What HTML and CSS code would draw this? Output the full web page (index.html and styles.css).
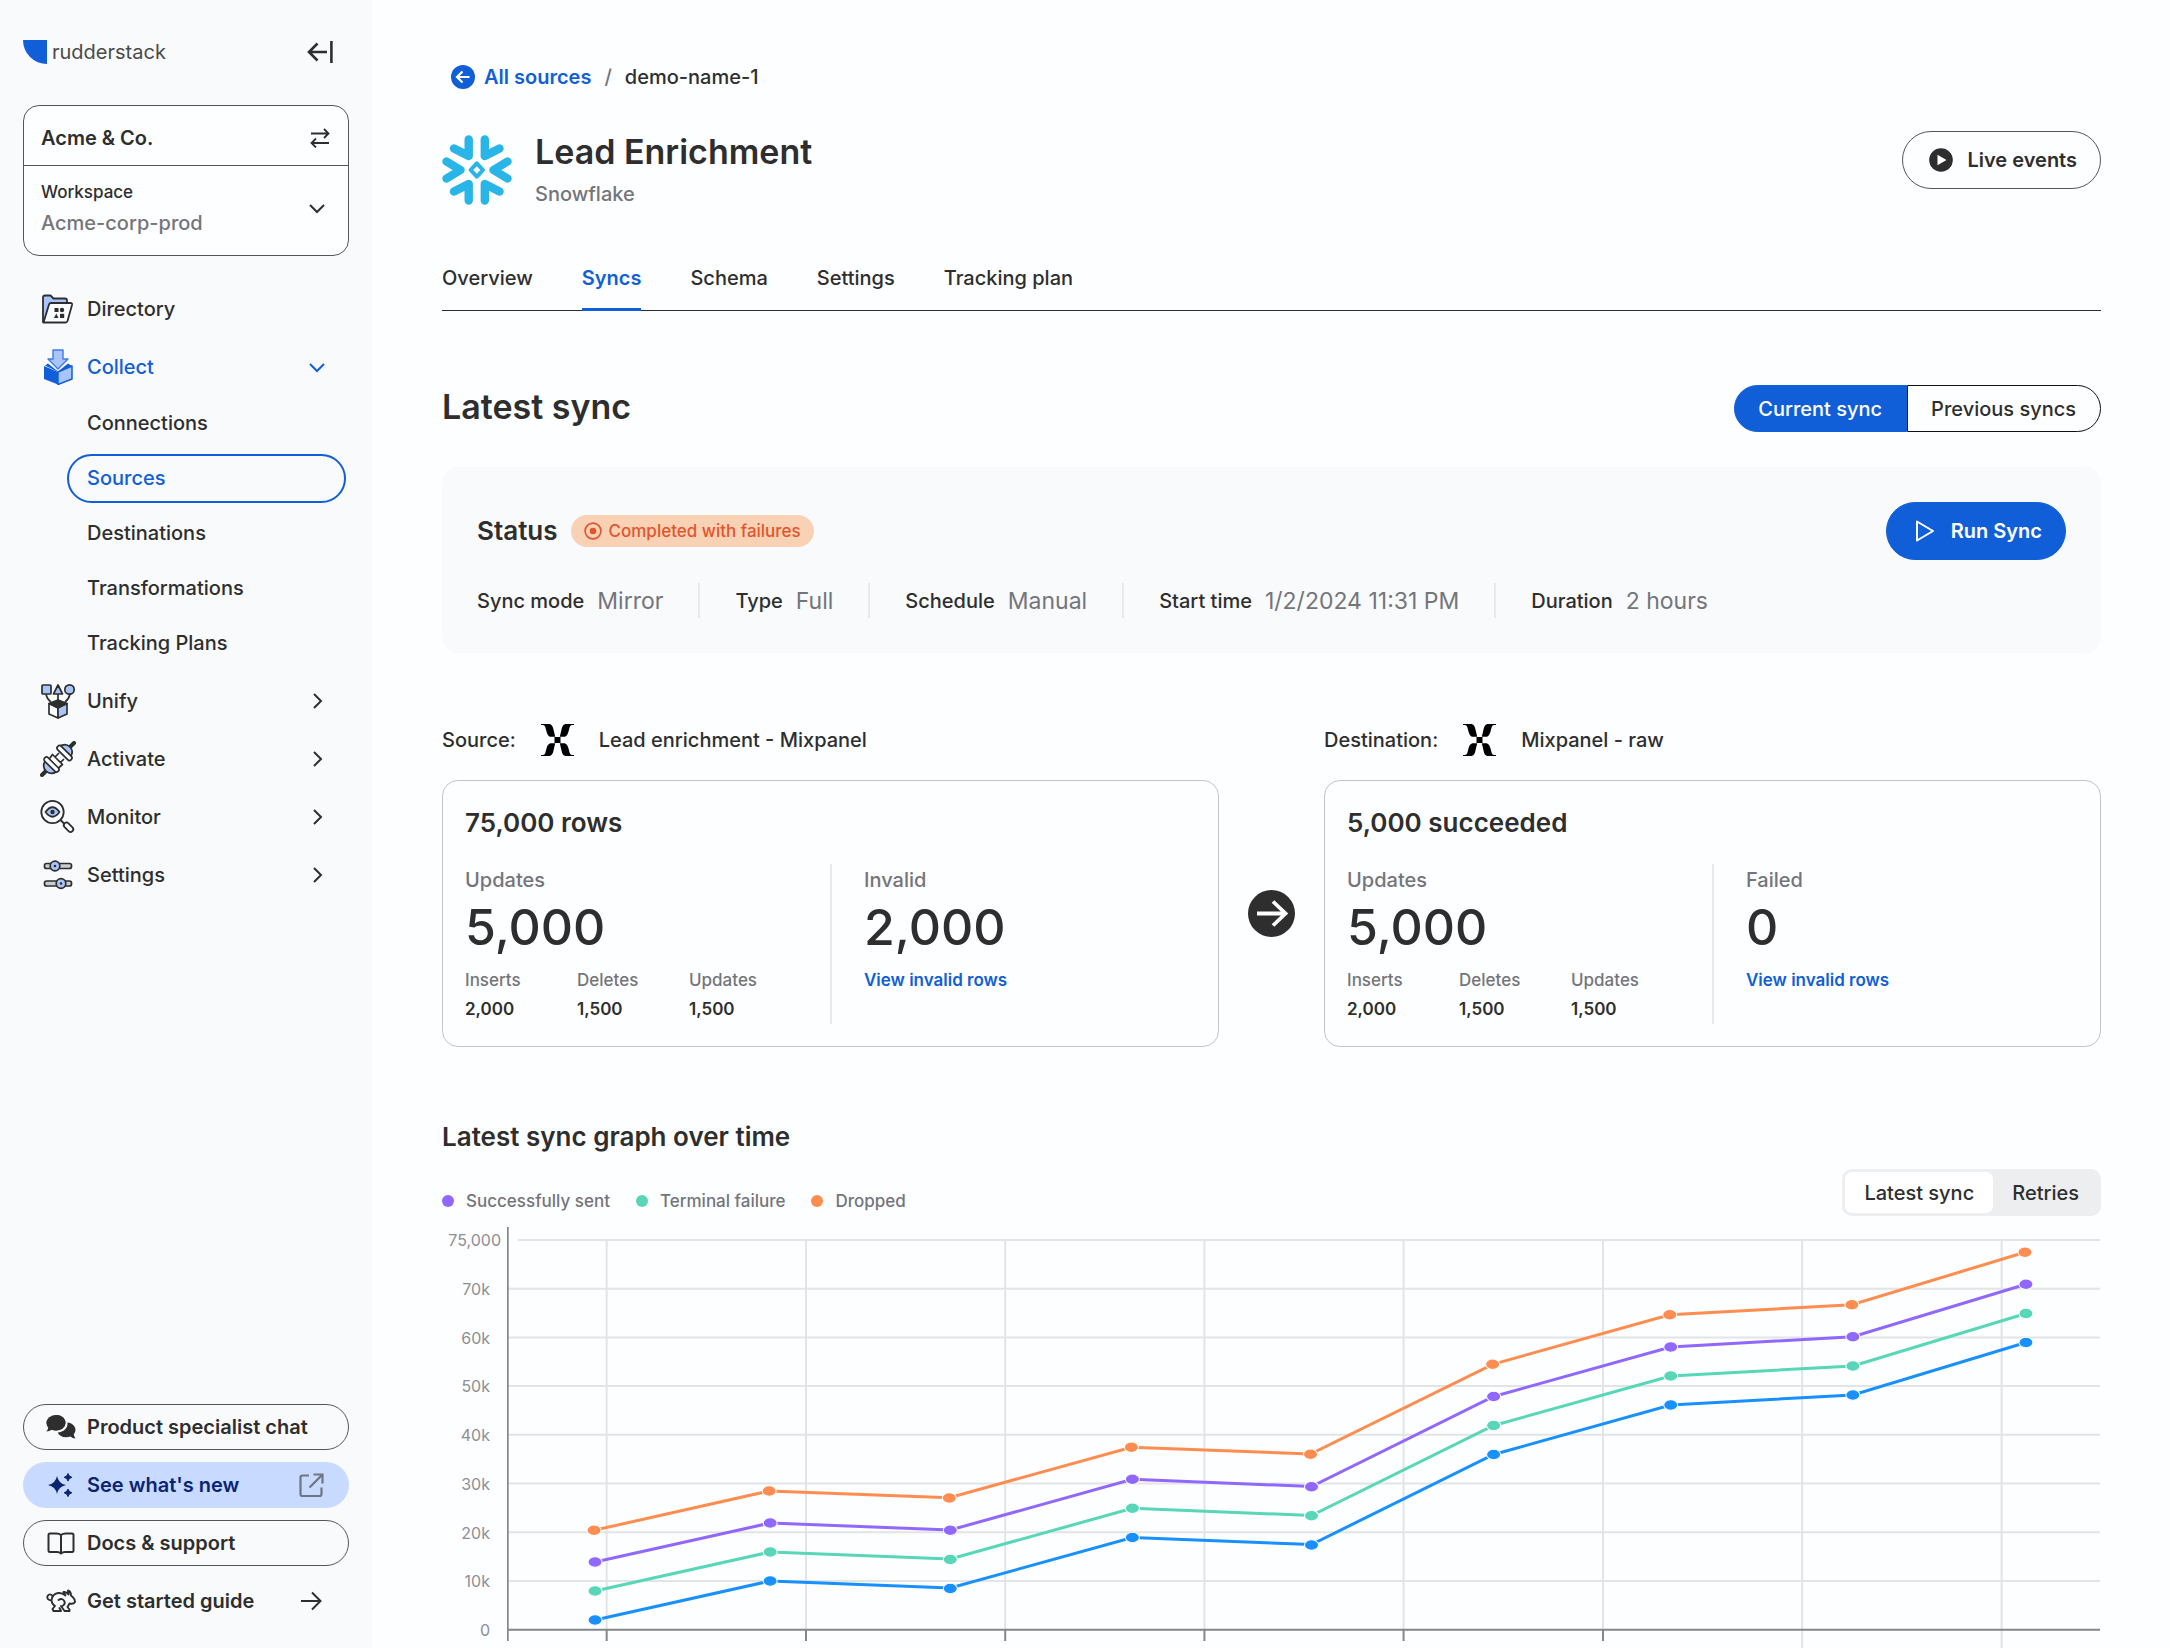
FILE: index.html
```html
<!DOCTYPE html>
<html lang="en">
<head>
<meta charset="utf-8">
<title>Lead Enrichment - Syncs</title>
<link rel="stylesheet" href="styles.css">
</head>
<body>
<svg class="sprite" aria-hidden="true">
  <symbol id="chevron-right" viewBox="0 0 20 20"><path d="M7 3l7 7-7 7" fill="none" stroke="currentColor" stroke-width="2"/></symbol>
  <symbol id="chevron-down" viewBox="0 0 20 20"><path d="M3 7l7 7 7-7" fill="none" stroke="currentColor" stroke-width="2"/></symbol>
  <symbol id="mixpanel" viewBox="0 0 33 32">
    <path id="mixpanel-arm" d="M0 0H7.500C11 0 11.800 2.500 12.500 5.500L14.200 12.800H10.300C7.500 12.800 6.300 10.500 5.500 7.500L4.300 3C3.800 1.300 2.500 1 0 1z"/>
    <use href="#mixpanel-arm" transform="matrix(-1 0 0 1 33 0)"/>
    <use href="#mixpanel-arm" transform="matrix(1 0 0 -1 0 32)"/>
    <use href="#mixpanel-arm" transform="matrix(-1 0 0 -1 33 32)"/>
    <path d="M13.500 13h6v6h-6z"/>
  </symbol>
</svg>
<div class="shell">
  <aside class="sidebar">
    <div class="sidebar-head">
      <a class="brand" href="#">
        <svg width="24" height="24" viewBox="0 0 24 24"><path d="M0 0h24v24A24 24 0 0 1 0 0z" fill="#115fd8"/></svg>
        <span>rudderstack</span>
      </a>
      <button class="collapse" aria-label="Collapse sidebar">
        <svg width="26" height="24" viewBox="0 0 26 24" fill="none" stroke="currentColor" stroke-width="2.600"><path d="M20 12H2M10.500 3.500L2 12l8.500 8.500M24.400 1v22"/></svg>
      </button>
    </div>

    <div class="workspace">
      <button class="org">
        <span>Acme &amp; Co.</span>
        <svg width="20" height="20" viewBox="0 0 20 20" fill="none" stroke="currentColor" stroke-width="1.800"><path d="M1 5.500h17M14 1l4.500 4.500L14 10M19 15H2M6 10.500L1.500 15 6 19.500"/></svg>
      </button>
      <button class="space">
        <span class="space-text"><span class="space-label">Workspace</span><span class="space-name">Acme-corp-prod</span></span>
        <svg class="chevron"><use href="#chevron-down"/></svg>
      </button>
    </div>

    <nav class="nav">
      <a class="nav-item" href="#">
        <svg class="nav-icon" viewBox="0 0 36 36" fill="none" stroke="#2e2e2e" stroke-width="1.800" stroke-linejoin="round">
          <path d="M3 31V6.500Q3 4.500 5 4.500h5.500l3 3H25q2 0 2 2V12L10 31z" fill="#a9c4fb"/>
          <path d="M3.500 31.500L9 13.500Q9.500 12 11 12h19.500q2 0 1.500 2l-4.500 16q-.5 1.500-2 1.500z" fill="#fdfeff"/>
          <g fill="#2e2e2e" stroke="none"><rect x="14.500" y="17" width="4" height="4"/><circle cx="22" cy="19" r="2.200"/><path d="M14 27l2.300-4.500 2.200 4.500z"/><rect x="20" y="22.800" width="4.200" height="4.200"/></g>
        </svg>
        <span>Directory</span>
      </a>
      <a class="nav-item is-open" href="#">
        <svg class="nav-icon" viewBox="0 0 36 36">
          <path d="M13 1h10v9h5L18 20 8 10h5z" fill="#a9c4fb" stroke="#3f7be6" stroke-width="1.400" stroke-linejoin="round"/>
          <path d="M5 16.500l3-2 10 8 10-8 4 2.500L18 23z" fill="#115fd8"/>
          <path d="M4 17l14 6v12.500L4 30z" fill="#115fd8"/>
          <path d="M32 17l-14 6v12.500L32 30z" fill="#a9c4fb" stroke="#115fd8" stroke-width="1.500" stroke-linejoin="round"/>
        </svg>
        <span>Collect</span>
        <svg class="chevron"><use href="#chevron-down"/></svg>
      </a>
      <div class="subnav">
        <a href="#">Connections</a>
        <a href="#" class="is-current" aria-current="page">Sources</a>
        <a href="#">Destinations</a>
        <a href="#">Transformations</a>
        <a href="#">Tracking Plans</a>
      </div>
      <a class="nav-item" href="#">
        <svg class="nav-icon" viewBox="0 0 36 36" fill="none" stroke="#2e2e2e" stroke-width="1.700" stroke-linejoin="round">
          <path d="M6 11q1 5 5 8M18 11v8M30 11q-1 5-5 8"/>
          <rect x="2" y="2" width="9" height="9" rx="1" fill="#a9c4fb"/><path d="M18 2l4.500 9h-9z" fill="#a9c4fb"/><circle cx="29.500" cy="6.500" r="4.700" fill="#a9c4fb"/>
          <path d="M9 20.500l9 4V35l-9-4z" fill="#fdfeff"/><path d="M27 20.500l-9 4V35l9-4z" fill="#a9c4fb"/>
          <path d="M9 20.500l9-3.500 9 3.500-9 4.500z" fill="#2e2e2e"/>
        </svg>
        <span>Unify</span>
        <svg class="chevron"><use href="#chevron-right"/></svg>
      </a>
      <a class="nav-item" href="#">
        <svg class="nav-icon" viewBox="0 0 36 36" fill="none" stroke="#2e2e2e" stroke-width="1.700" stroke-linejoin="round" stroke-linecap="round">
          <path d="M30 6l4-4M2 34l4-4" stroke-width="4"/>
          <path d="M17.500 6.500Q25 1 30 6t-1.500 12.500z" fill="#a9c4fb"/>
          <rect x="15" y="9.500" width="19" height="5" rx="2.500" transform="rotate(45 24.500 12)" fill="#fdfeff"/>
          <path d="M6.500 18Q1 25 6 30t12.500-.5z" fill="#a9c4fb"/>
          <rect x="2" y="21" width="19" height="5" rx="2.500" transform="rotate(45 11.500 23.500)" fill="#fdfeff"/>
          <path d="M10 17l2.500-3.500 10 10L19 26.500M15 16l3.500-3.500M20.500 21.500l3-3" fill="#fdfeff"/>
        </svg>
        <span>Activate</span>
        <svg class="chevron"><use href="#chevron-right"/></svg>
      </a>
      <a class="nav-item" href="#">
        <svg class="nav-icon" viewBox="0 0 36 36" fill="none" stroke="#2e2e2e" stroke-width="1.800" stroke-linejoin="round">
          <circle cx="12.500" cy="13" r="11.200"/>
          <path d="M5.500 13q7-9.500 14 0-7 9.500-14 0z" fill="#a9c4fb"/><circle cx="12.500" cy="13" r="2.200" fill="#2e2e2e" stroke="none"/>
          <path d="M20.500 21l4 4"/><rect x="23" y="25.500" width="11" height="5.500" rx="2.700" transform="rotate(45 28.500 28.300)"/>
        </svg>
        <span>Monitor</span>
        <svg class="chevron"><use href="#chevron-right"/></svg>
      </a>
      <a class="nav-item" href="#">
        <svg class="nav-icon" viewBox="0 0 36 36" fill="#c9ccd0" stroke="#2e2e2e" stroke-width="1.700">
          <rect x="4.500" y="6.500" width="27" height="5" rx="2"/><circle cx="15" cy="9" r="4.800" fill="#a9c4fb"/><circle cx="15" cy="9" r="1.300" fill="#2e2e2e" stroke="none"/>
          <rect x="4.500" y="24" width="27" height="5" rx="2"/><circle cx="21" cy="26.500" r="4.800" fill="#a9c4fb"/><circle cx="21" cy="26.500" r="1.300" fill="#2e2e2e" stroke="none"/>
        </svg>
        <span>Settings</span>
        <svg class="chevron"><use href="#chevron-right"/></svg>
      </a>
    </nav>

    <div class="help">
      <button class="help-item outlined">
        <svg class="help-icon" viewBox="0 0 30 26" fill="#2e2e2e">
          <path d="M10 1c5.500 0 9.500 3.400 9.500 7.800S15.500 16.500 10 16.500q-2.300 0-4.300-.8Q3.500 17.500.3 17.500q1.600-1.700 2-4Q.5 11.500.5 8.800.5 4.400 10 1z"/><ellipse cx="10" cy="8.700" rx="9.500" ry="7.700"/>
          <path d="M21.500 8.500c4.500.6 8 3.500 8 7.300q0 2.700-1.800 4.600.5 2.300 2 4-3.200 0-5.400-1.900-2 .8-4.200.8c-4 0-7-2-8.500-4.800 6-.3 10.500-4.300 9.900-10z"/>
        </svg>
        <span>Product specialist chat</span>
      </button>
      <a class="help-item highlight" href="#">
        <svg class="help-icon" viewBox="0 0 30 26" fill="#0a2472">
          <path d="M11 4q1.500 7.500 9 9-7.500 1.500-9 9-1.500-7.500-9-9 7.500-1.500 9-9z"/>
          <path d="M22 1.500q.6 3 3.800 3.800-3.200.8-3.800 3.800-.6-3-3.800-3.800 3.200-.8 3.800-3.800zM22 17q.6 3 3.800 3.800-3.200.8-3.800 3.800-.6-3-3.800-3.800 3.200-.8 3.800-3.800z" stroke="#0a2472"/>
        </svg>
        <span>See what's new</span>
        <svg class="help-trail" viewBox="0 0 26 26" fill="none" stroke="#6f7683" stroke-width="2.200"><path d="M11 3.500H4.500Q2.500 3.500 2.500 5.500V22q0 2 2 2h17q2 0 2-2v-6.500M11.500 15.500L24.500 2.500M15.500 2.500h9v9"/></svg>
      </a>
      <a class="help-item outlined" href="#">
        <svg class="help-icon" viewBox="0 0 30 26" fill="none" stroke="#2e2e2e" stroke-width="2" stroke-linejoin="round"><path d="M15 5Q13 3.500 10.500 3.500H4Q2.500 3.500 2.500 5v15.500Q2.500 22 4 22h7q2.500 0 4 1.500Q16.500 22 19 22h7q1.500 0 1.500-1.500V5q0-1.500-1.500-1.500h-6.500Q17 3.500 15 5zM15 5v18"/></svg>
        <span>Docs &amp; support</span>
      </a>
      <a class="help-item plain" href="#">
        <svg class="help-icon" viewBox="0 0 30 26" fill="none" stroke="#2e2e2e" stroke-width="1.900" stroke-linejoin="round" stroke-linecap="round">
          <path d="M7 8.500Q4 4.500 1.500 8q-1 4 4 4.500M5.500 12.500Q6 6 12 5q4-.5 7.500 2.500L17.500 4q3-.5 5 2.500L22 2.500q3 1 3 5 4 3 4 6.500-1.500 2.500-5.500 1.500l-2 3.500 2 2.500v1.500h-5l-3.500-5M5.500 12.500Q6 16.500 9 18l-2.500 3 1 2h7.500l-1.500-3M12.500 12q4-2.500 6 1.500 1 3-2 4.500"/>
        </svg>
        <span>Get started guide</span>
        <svg class="help-trail" viewBox="0 0 26 26" fill="none" stroke="#2e2e2e" stroke-width="2"><path d="M3 13h19M14 4.500l8.500 8.500-8.500 8.500"/></svg>
      </a>
    </div>
  </aside>

  <main class="main">
    <nav class="crumbs" aria-label="Breadcrumb">
      <a href="#">
        <svg width="24" height="24" viewBox="0 0 24 24"><circle cx="12" cy="12" r="12" fill="#115fd8"/><path d="M18.500 12h-12M11.500 6.500L6 12l5.500 5.500" fill="none" stroke="#fff" stroke-width="2.200"/></svg>
        All sources
      </a>
      <span class="slash">/</span>
      <span>demo-name-1</span>
    </nav>

    <header class="page-head">
      <svg class="source-logo" viewBox="0 0 70 70" fill="none" stroke="#29b5e8" stroke-width="8.400" stroke-linecap="round" stroke-linejoin="round">
        <path d="M12 13.500l14.700 7.500V4.500M57.500 13.500L42.800 21V4.500M12 56.500L26.700 49v16.500M57.500 56.500L42.800 49v16.500M4.500 26.500L18.500 35l-14 8.500M65.500 26.500L51.500 35l14 8.500"/>
        <path d="M34.800 28.300l6.200 6.700-6.200 6.700L28.600 35z" stroke-width="4"/>
      </svg>
      <div class="page-title">
        <h1>Lead Enrichment</h1>
        <p>Snowflake</p>
      </div>
      <button class="pill-button outline">
        <svg width="24" height="24" viewBox="0 0 24 24"><circle cx="12" cy="12" r="11.800" fill="#2e2e2e"/><path d="M8.500 6.800l9 5.200-9 5.200z" fill="#fff"/></svg>
        Live events
      </button>
    </header>

    <nav class="tabs" aria-label="Source sections">
      <a href="#">Overview</a>
      <a href="#" class="is-active" aria-current="page">Syncs</a>
      <a href="#">Schema</a>
      <a href="#">Settings</a>
      <a href="#">Tracking plan</a>
    </nav>

    <div class="section-head">
      <h2>Latest sync</h2>
      <div class="segmented">
        <button class="is-on">Current sync</button>
        <button>Previous syncs</button>
      </div>
    </div>

    <section class="status">
      <div class="status-head">
        <h3>Status</h3>
        <span class="badge">
          <svg width="18" height="18" viewBox="0 0 18 18"><circle cx="9" cy="9" r="7.900" fill="none" stroke="currentColor" stroke-width="1.700"/><circle cx="9" cy="9" r="3.300" fill="currentColor"/></svg>
          Completed with failures
        </span>
        <button class="pill-button primary">
          <svg width="24" height="24" viewBox="0 0 24 24" fill="none" stroke="#fff" stroke-width="2" stroke-linejoin="round"><path d="M4 2.500l16 9.500L4 21.500z"/></svg>
          Run Sync
        </button>
      </div>
      <dl class="facts">
        <div><dt>Sync mode</dt><dd>Mirror</dd></div>
        <div><dt>Type</dt><dd>Full</dd></div>
        <div><dt>Schedule</dt><dd>Manual</dd></div>
        <div><dt>Start time</dt><dd>1/2/2024 11:31 PM</dd></div>
        <div><dt>Duration</dt><dd>2 hours</dd></div>
      </dl>
    </section>

    <section class="transfer">
      <div class="endpoint">
        <span>Source:</span>
        <svg class="endpoint-logo"><use href="#mixpanel"/></svg>
        <span>Lead enrichment - Mixpanel</span>
      </div>
      <div class="endpoint endpoint-to">
        <span>Destination:</span>
        <svg class="endpoint-logo"><use href="#mixpanel"/></svg>
        <span>Mixpanel - raw</span>
      </div>
      <article class="card">
        <h3>75,000 rows</h3>
        <div class="card-body">
          <div class="metric">
            <span class="metric-label">Updates</span>
            <strong class="metric-value">5,000</strong>
            <dl class="breakdown">
              <div><dt>Inserts</dt><dd>2,000</dd></div>
              <div><dt>Deletes</dt><dd>1,500</dd></div>
              <div><dt>Updates</dt><dd>1,500</dd></div>
            </dl>
          </div>
          <div class="metric">
            <span class="metric-label">Invalid</span>
            <strong class="metric-value">2,000</strong>
            <a href="#">View invalid rows</a>
          </div>
        </div>
      </article>
      <svg class="transfer-arrow" viewBox="0 0 47 47"><circle cx="23.500" cy="23.500" r="23.500" fill="#2e2e2e"/><path d="M9 23.500h28M25 11.500l12.500 12L25 35.500" fill="none" stroke="#fff" stroke-width="3.800"/></svg>
      <article class="card">
        <h3>5,000 succeeded</h3>
        <div class="card-body">
          <div class="metric">
            <span class="metric-label">Updates</span>
            <strong class="metric-value">5,000</strong>
            <dl class="breakdown">
              <div><dt>Inserts</dt><dd>2,000</dd></div>
              <div><dt>Deletes</dt><dd>1,500</dd></div>
              <div><dt>Updates</dt><dd>1,500</dd></div>
            </dl>
          </div>
          <div class="metric">
            <span class="metric-label">Failed</span>
            <strong class="metric-value">0</strong>
            <a href="#">View invalid rows</a>
          </div>
        </div>
      </article>
    </section>

    <section class="graph">
      <h3>Latest sync graph over time</h3>
      <div class="graph-head">
        <ul class="legend">
          <li class="sent">Successfully sent</li>
          <li class="failed">Terminal failure</li>
          <li class="dropped">Dropped</li>
        </ul>
        <div class="switch">
          <button class="is-on">Latest sync</button>
          <button>Retries</button>
        </div>
      </div>
      <div class="chart">
        <div class="y-axis">
          <span>75,000</span><span>70k</span><span>60k</span><span>50k</span><span>40k</span><span>30k</span><span>20k</span><span>10k</span><span>0</span>
        </div>
        <svg class="plot" viewBox="0 0 1593 421" preserveAspectRatio="none" role="img" aria-label="Rows per sync over time">
          <path class="grid" d="M11 13H1592M0 61.700H1592M0 110.400H1592M0 159H1592M0 207.800H1592M0 256.500H1592M0 305.200H1592M0 354H1592M99.600 13V403M298.800 13V403M497.900 13V403M697 13V403M896 13V403M1095.300 13V403M1294.300 13V421M1493.700 13V421"/>
          <path class="axis" d="M.7 0V414M0 402.700H1592M99.600 403V414M298.800 403V414M497.900 403V414M697 403V414M896 403V414M1095.300 403V414"/>
          <g class="series blue">
            <polyline points="88,393 263,354 443,361 625,310.500 804,317.500 986,227.500 1163,178 1345,168 1518,115.500"/>
            <ellipse cx="88" cy="393" rx="7" ry="5.200"/><ellipse cx="263" cy="354" rx="7" ry="5.200"/><ellipse cx="443" cy="361.500" rx="7" ry="5.200"/><ellipse cx="625" cy="310.500" rx="7" ry="5.200"/><ellipse cx="804" cy="318" rx="7" ry="5.200"/><ellipse cx="986" cy="227.500" rx="7" ry="5.200"/><ellipse cx="1163" cy="178" rx="7" ry="5.200"/><ellipse cx="1345" cy="168" rx="7" ry="5.200"/><ellipse cx="1518" cy="115.500" rx="7" ry="5.200"/>
          </g>
          <g class="series green">
            <polyline points="88,364 263,325 443,332 625,281.300 804,288.500 986,198.500 1163,149 1345,139 1518,86.500"/>
            <ellipse cx="88" cy="364" rx="7" ry="5.200"/><ellipse cx="263" cy="325" rx="7" ry="5.200"/><ellipse cx="443" cy="332.500" rx="7" ry="5.200"/><ellipse cx="625" cy="281.300" rx="7" ry="5.200"/><ellipse cx="804" cy="288.700" rx="7" ry="5.200"/><ellipse cx="986" cy="198.500" rx="7" ry="5.200"/><ellipse cx="1163" cy="149" rx="7" ry="5.200"/><ellipse cx="1345" cy="139" rx="7" ry="5.200"/><ellipse cx="1518" cy="86.500" rx="7" ry="5.200"/>
          </g>
          <g class="series purple">
            <polyline points="88,335 263,296 443,303 625,252.300 804,259.500 986,169.500 1163,120 1345,109.700 1518,57.300"/>
            <ellipse cx="88" cy="335" rx="7" ry="5.200"/><ellipse cx="263" cy="296" rx="7" ry="5.200"/><ellipse cx="443" cy="303.300" rx="7" ry="5.200"/><ellipse cx="625" cy="252.300" rx="7" ry="5.200"/><ellipse cx="804" cy="259.700" rx="7" ry="5.200"/><ellipse cx="986" cy="169.500" rx="7" ry="5.200"/><ellipse cx="1163" cy="120" rx="7" ry="5.200"/><ellipse cx="1345" cy="109.700" rx="7" ry="5.200"/><ellipse cx="1518" cy="57.300" rx="7" ry="5.200"/>
          </g>
          <g class="series orange">
            <polyline points="87,303.300 262,264 442,270.700 624,220.300 803,227 985,137.300 1162,87.700 1344,77.700 1517,25.300"/>
            <ellipse cx="87" cy="303.300" rx="7" ry="5.200"/><ellipse cx="262" cy="264" rx="7" ry="5.200"/><ellipse cx="442" cy="271" rx="7" ry="5.200"/><ellipse cx="624" cy="220.300" rx="7" ry="5.200"/><ellipse cx="803" cy="227.300" rx="7" ry="5.200"/><ellipse cx="985" cy="137.300" rx="7" ry="5.200"/><ellipse cx="1162" cy="87.700" rx="7" ry="5.200"/><ellipse cx="1344" cy="77.700" rx="7" ry="5.200"/><ellipse cx="1517" cy="25.300" rx="7" ry="5.200"/>
          </g>
        </svg>
      </div>
    </section>
  </main>
</div>
</body>
</html>
```
FILE: styles.css
```css
:root {
  --ink: #2e2e2e;
  --muted: #74757a;
  --blue: #115fd8;
  --page: #fdfeff;
  --panel: #f9fafc;
  --rule: #e8e9ec;
}

* { box-sizing: border-box; }

body {
  margin: 0;
  background: var(--page);
  color: var(--ink);
  font: 500 20px/24px Inter, "Liberation Sans", sans-serif;
}

h1, h2, h3, p, dl, dd, ul { margin: 0; padding: 0; }
ul { list-style: none; }
a { color: inherit; text-decoration: none; }
button {
  margin: 0;
  padding: 0;
  border: 0;
  background: none;
  color: inherit;
  font: inherit;
  cursor: pointer;
}
svg { display: block; flex: none; }
.sprite { display: none; }

.shell { display: flex; min-height: 100vh; }

/* Sidebar */
.sidebar {
  flex: none;
  width: 372px;
  display: flex;
  flex-direction: column;
  padding: 40px 23px 24px;
  background: var(--panel);
}
.sidebar-head {
  display: flex;
  justify-content: space-between;
  align-items: center;
  padding-right: 16px;
  margin-bottom: 41px;
}
.brand {
  display: flex;
  align-items: center;
  gap: 5px;
  font-weight: 400;
  color: #4a4a4a;
}
.workspace {
  border: 1px solid #55565a;
  border-radius: 16px;
  background: var(--page);
}
.org, .space {
  width: 100%;
  display: flex;
  justify-content: space-between;
  align-items: center;
  text-align: left;
}
.org {
  height: 60px;
  padding: 4px 18px 0 17px;
  border-bottom: 1px solid #55565a;
  font-weight: 600;
}
.space { height: 89px; padding: 0 21px 6px 17px; }
.space-text { display: flex; flex-direction: column; gap: 7px; }
.space-label { font-size: 17px; }
.space-name { color: var(--muted); }
.chevron { width: 20px; height: 20px; }

.nav { margin-top: 24px; }
.nav-item {
  display: flex;
  align-items: center;
  gap: 11px;
  height: 58px;
  padding: 0 22px 0 17px;
}
.nav-item .chevron { margin-left: auto; }
.nav-item.is-open { color: var(--blue); }
.nav-icon { width: 36px; height: 36px; }
.subnav {
  display: flex;
  flex-direction: column;
  gap: 6px;
  padding: 3px 3px 4px 44px;
}
.subnav a {
  height: 49px;
  padding: 10px 18px;
  border: 2px solid transparent;
  border-radius: 25px;
}
.subnav a.is-current { border-color: var(--blue); color: var(--blue); }

.help {
  margin-top: auto;
  display: flex;
  flex-direction: column;
  gap: 12px;
}
.help-item {
  display: flex;
  align-items: center;
  gap: 11px;
  height: 46px;
  padding: 0 24px 0 22px;
  border: 1px solid transparent;
  border-radius: 23px;
  font-weight: 600;
}
.help-item.outlined { border-color: #55565a; }
.help-item.highlight { background: #c8daff; color: #0a2472; }
.help-icon { width: 30px; height: 26px; }
.help-trail { width: 26px; height: 26px; margin-left: auto; }

/* Page header */
.main {
  flex: 1;
  min-width: 0;
  padding: 65px 69px 0 70px;
}
.crumbs {
  display: flex;
  align-items: center;
  gap: 13px;
  padding-left: 9px;
}
.crumbs a {
  display: flex;
  gap: 9px;
  color: var(--blue);
  font-weight: 600;
}
.slash { color: var(--muted); }
.page-head {
  display: flex;
  align-items: center;
  gap: 23px;
  min-height: 78px;
  margin-top: 42px;
}
.source-logo { width: 70px; height: 70px; }
.page-title { display: grid; gap: 10px; padding-bottom: 2px; }
.page-title p { color: var(--muted); }
h1, h2 { font-size: 34px; line-height: 40px; font-weight: 600; }
h3 { font-size: 26px; line-height: 32px; font-weight: 600; }

.pill-button {
  display: flex;
  align-items: center;
  gap: 14px;
  height: 58px;
  margin-left: auto;
  padding: 0 23px 0 26px;
  border: 1px solid var(--blue);
  border-radius: 29px;
  font-weight: 600;
}
.pill-button.outline { align-self: flex-start; border-color: #55565a; }
.pill-button.primary { background: var(--blue); color: #fff; }

.tabs {
  display: flex;
  gap: 49px;
  margin-top: 57px;
  border-bottom: 1px solid #2e2e2e;
}
.tabs a {
  margin-bottom: -1px;
  padding-bottom: 18px;
  border-bottom: 3px solid transparent;
}
.tabs .is-active { border-color: var(--blue); color: var(--blue); font-weight: 600; }

.section-head {
  display: flex;
  justify-content: space-between;
  align-items: center;
  margin: 74px 0 35px;
}
.section-head h2 { padding-bottom: 4px; }
.segmented { display: flex; }
.segmented button {
  height: 47px;
  padding: 0 24px 0 23px;
  border: 1px solid #111;
  border-radius: 0 24px 24px 0;
}
.segmented .is-on {
  border-color: var(--blue);
  border-radius: 24px 0 0 24px;
  background: var(--blue);
  color: #fff;
}

/* Status panel */
.status { padding: 35px; border-radius: 16px; background: var(--panel); }
.status-head { display: flex; align-items: center; gap: 13px; }
.badge {
  display: flex;
  align-items: center;
  gap: 7px;
  height: 32px;
  padding: 0 13px;
  border-radius: 16px;
  background: #f9d2b6;
  color: #e2552c;
  font-size: 17px;
}
.facts { display: flex; margin-top: 23px; }
.facts div {
  display: flex;
  align-items: center;
  gap: 13px;
  height: 35px;
  padding: 0 35px;
  border-left: 2px solid var(--rule);
}
.facts div:first-child { padding-left: 0; border-left: 0; }
.facts dd { color: var(--muted); font-size: 23px; font-weight: 400; }

/* Source to destination */
.transfer {
  display: grid;
  grid-template-columns: 1fr 47px 1fr;
  gap: 22px 29px;
  align-items: center;
  margin-top: 69px;
}
.endpoint { display: flex; align-items: center; gap: 25px; height: 36px; }
.endpoint-to { grid-column: 3; }
.endpoint-logo { width: 33px; height: 32px; }
.transfer-arrow { width: 47px; height: 47px; }
.card {
  padding: 26px 23px 22px 22px;
  border: 1px solid #c2c4c9;
  border-radius: 16px;
}
.card-body {
  display: grid;
  grid-template-columns: 1fr 1fr;
  margin-top: 25px;
}
.metric { display: flex; flex-direction: column; padding: 4px 0 3px; }
.metric + .metric { padding-left: 32px; border-left: 2px solid var(--rule); }
.metric-label { color: var(--muted); }
.metric-value {
  margin: 11px 0 17px;
  font-size: 50px;
  line-height: 48px;
  font-weight: 500;
}
.metric a { color: var(--blue); font-size: 17px; font-weight: 600; }
.breakdown {
  display: grid;
  grid-template-columns: repeat(3, 112px);
  font-size: 17px;
}
.breakdown dt { color: var(--muted); }
.breakdown dd { margin-top: 5px; font-weight: 600; }

/* Graph */
.graph { margin-top: 74px; }
.graph-head {
  display: flex;
  justify-content: space-between;
  align-items: flex-end;
  margin: 16px 0 11px;
}
.legend {
  display: flex;
  gap: 26px;
  padding-bottom: 3px;
  color: var(--muted);
  font-size: 17px;
}
.legend li { display: flex; align-items: center; gap: 12px; }
.legend li::before {
  content: "";
  width: 12px;
  height: 12px;
  border-radius: 50%;
  background: currentColor;
}
.legend .sent::before { background: #9068ff; }
.legend .failed::before { background: #57d6b8; }
.legend .dropped::before { background: #ff8d4f; }
.switch {
  display: flex;
  height: 47px;
  padding: 3px;
  border-radius: 10px;
  background: #edeef0;
}
.switch button { padding: 0 19px; border-radius: 7px; }
.switch .is-on { background: #fff; }

.chart { display: flex; }
.y-axis {
  flex: none;
  width: 65px;
  height: 408px;
  margin-top: 4px;
  padding-right: 6px;
  display: flex;
  flex-direction: column;
  justify-content: space-between;
  align-items: flex-end;
  color: #8e8f93;
  font-size: 16px;
  line-height: 18px;
  font-weight: 400;
}
.y-axis span + span { padding-right: 11px; }
.plot { flex: 1; min-width: 0; height: 421px; }
.plot path, .plot polyline { fill: none; stroke-width: 2px; vector-effect: non-scaling-stroke; }
.grid { stroke: #46485024; }
.axis { stroke: #85868a; }
.series polyline { stroke-width: 3px; }
.series ellipse { stroke: var(--page); stroke-width: 1px; }
.blue polyline { stroke: #1890ff; }
.blue ellipse { fill: #1890ff; }
.green polyline { stroke: #57d6b8; }
.green ellipse { fill: #57d6b8; }
.purple polyline { stroke: #9068ff; }
.purple ellipse { fill: #9068ff; }
.orange polyline { stroke: #ff8d4f; }
.orange ellipse { fill: #ff8d4f; }
```
